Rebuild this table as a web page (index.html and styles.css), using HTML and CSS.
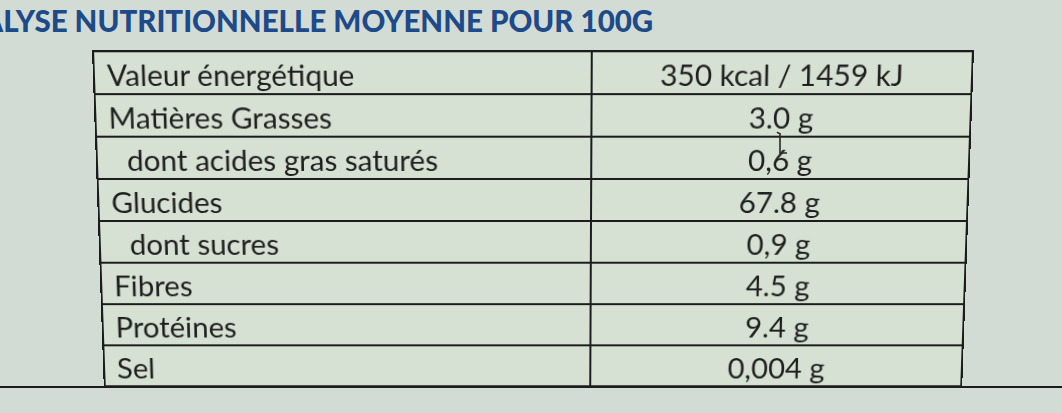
FILE: index.html
```html
<!DOCTYPE html>
<html lang="fr">
<head>
<meta charset="utf-8">
<title>Analyse nutritionnelle</title>
<link rel="stylesheet" href="styles.css">
</head>
<body>
<div class="page">
  <h1 class="title">ANALYSE NUTRITIONNELLE MOYENNE POUR 100G</h1>
  <div class="sheet">
    <table class="nutri">
      <tr><td class="label">Valeur énergétique</td><td class="val">350 kcal / 1459 kJ</td></tr>
      <tr><td class="label">Matières Grasses</td><td class="val">3.0 g</td></tr>
      <tr><td class="label sub">dont acides gras saturés</td><td class="val">0,6 g</td></tr>
      <tr><td class="label">Glucides</td><td class="val">67.8 g</td></tr>
      <tr><td class="label sub">dont sucres</td><td class="val">0,9 g</td></tr>
      <tr><td class="label">Fibres</td><td class="val">4.5 g</td></tr>
      <tr><td class="label">Protéines</td><td class="val">9.4 g</td></tr>
      <tr><td class="label">Sel</td><td class="val">0,004 g</td></tr>
    </table>
  </div>
  <svg class="cursor" width="16" height="28" viewBox="0 0 16 28">
    <path d="M2 2 Q4 4 5 3 M5 3 L5 23 L12 23" fill="none" stroke="#2a2a2a" stroke-width="1.6"/>
  </svg>
</div>
</body>
</html>
```
FILE: styles.css
```css
html, body {
  margin: 0;
  padding: 0;
}
body {
  width: 1062px;
  height: 413px;
  overflow: hidden;
  background: #d3dbd5;
  font-family: Lato, "Open Sans", "Liberation Sans", sans-serif;
}
.page {
  position: relative;
  height: 413px;
}
.title {
  margin: 0 0 0 -61px;
  padding-top: 6px;
  height: 50px;
  box-sizing: border-box;
  font-size: 29.5px;
  line-height: 30px;
  font-weight: 900;
  color: #1d4a88;
  white-space: nowrap;
}
.sheet {
  border-bottom: 2px solid #1c1c1c;
  padding-left: 98px;
  margin-top: 2px;
}
.nutri {
  border-collapse: collapse;
  width: 870px;
  margin-bottom: -4px;
  background: #d6e1d3;
  color: #1f1f1f;
  transform: perspective(1000px) rotateX(-4.6deg);
  transform-origin: 50% 50%;
}
.nutri td {
  border: 2px solid #1c1c1c;
  height: 42px;
  padding: 3px 0 0 0;
  box-sizing: border-box;
  font-size: 29.5px;
  line-height: 36px;
  vertical-align: middle;
}
.label {
  width: 492px;
  padding-left: 12px !important;
}
.label.sub {
  padding-left: 29px !important;
}
.val {
  text-align: center;
}
.cursor {
  position: absolute;
  left: 775px;
  top: 130px;
}
```
